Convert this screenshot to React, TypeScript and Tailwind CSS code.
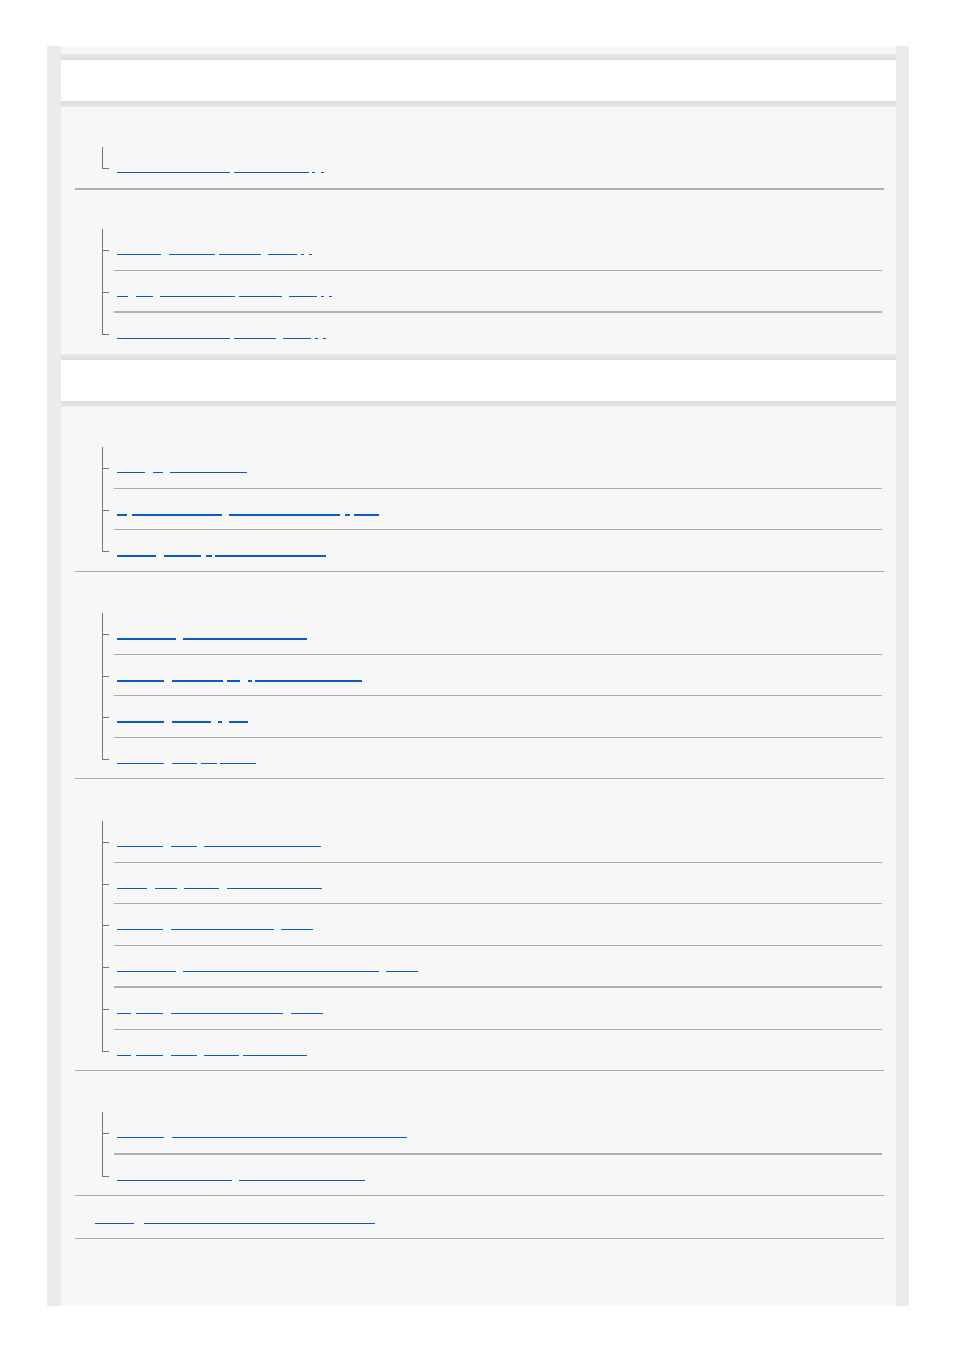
type Seg = [number, number];
type Row = { segs: Seg[]; bold?: boolean; rule?: 'thin' | 'thick' | 'none' };

const LINK = 'bg-[#0b5bc4]';

function Underline({ segs, start, bold }: { segs: Seg[]; start: number; bold?: boolean }) {
  let prev = start;
  return (
    <a href="#" className="flex">
      {segs.map(([a, b], i) => {
        const gap = a - prev;
        prev = b;
        return (
          <span
            key={i}
            className={`${LINK} ${bold ? 'h-[2px]' : 'h-px'}`}
            style={{ marginLeft: gap, width: b - a }}
          />
        );
      })}
    </a>
  );
}

function TreeItem({ row, last }: { row: Row; last: boolean }) {
  const rule = row.rule ?? 'thin';
  const h = rule === 'thick' ? 'h-[42.5px]' : rule === 'thin' ? 'h-[41.5px]' : 'h-[40.5px]';
  const border =
    rule === 'thick'
      ? 'border-b-2 border-[#b0b0b0]'
      : rule === 'thin'
        ? 'border-b border-[#ababab]'
        : '';
  return (
    <li className={`flex ${h}`}>
      {/* connector */}
      <div className="flex w-[12px] flex-col">
        <div className="h-[22px] w-[7px] border-b border-l border-[#777777]" />
        {!last && <div className="flex-1 border-l border-[#777777]" />}
      </div>
      <div className={`flex-1 pt-[25px] pl-[3px] ${border}`}>
        <Underline segs={row.segs} start={117} bold={row.bold} />
      </div>
    </li>
  );
}

function Section({ pt, rows, bottom }: { pt: string; rows: Row[]; bottom: 'thin' | 'thick' | 'none' }) {
  const b =
    bottom === 'thick'
      ? 'border-b-2 border-[#b0b0b0]'
      : bottom === 'thin'
        ? 'border-b border-[#ababab]'
        : '';
  return (
    <section className={`mr-[12px] ml-[14px] ${pt} ${b}`}>
      <ul className="mr-[2px] ml-[27px]">
        {rows.map((r, i) => (
          <TreeItem key={i} row={r} last={i === rows.length - 1} />
        ))}
      </ul>
    </section>
  );
}

function HeaderBar() {
  return (
    <div className="flex flex-col">
      <div className="h-[6px] bg-gradient-to-b from-[#e8e8e8] to-[#dcdcdc]" />
      <div className="h-[41px] bg-white" />
      <div className="h-[6px] bg-gradient-to-b from-[#dcdcdc] to-[#e9e9e9]" />
    </div>
  );
}

const s1: Row[] = [
  { segs: [[117, 230], [234, 309], [312, 315], [321, 324]], rule: 'none' },
];

const s2: Row[] = [
  { segs: [[117, 161], [169, 215], [219, 261], [268, 297], [301, 304], [309, 312]] },
  { segs: [[117, 128], [136, 153], [160, 235], [239, 282], [289, 317], [321, 324], [329, 332]], rule: 'thick' },
  { segs: [[117, 230], [234, 276], [283, 311], [315, 318], [323, 326]], rule: 'none' },
];

const s3: Row[] = [
  { segs: [[117, 145], [153, 163], [170, 247]] },
  { segs: [[117, 127], [132, 222], [229, 340], [345, 350], [354, 379]], bold: true },
  { segs: [[117, 156], [164, 201], [206, 212], [215, 326]], bold: true, rule: 'none' },
];

const s4: Row[] = [
  { segs: [[117, 176], [183, 307]], bold: true },
  { segs: [[117, 164], [172, 223], [227, 240], [248, 252], [255, 362]], bold: true },
  { segs: [[117, 164], [172, 211], [218, 222], [229, 248]], bold: true },
  { segs: [[117, 164], [172, 197], [201, 217], [220, 256]], rule: 'none' },
];

const s5: Row[] = [
  { segs: [[117, 163], [171, 197], [204, 321]] },
  { segs: [[117, 147], [155, 177], [184, 219], [227, 322]] },
  { segs: [[117, 163], [171, 274], [281, 313]] },
  { segs: [[117, 176], [183, 379], [386, 418]], rule: 'thick' },
  { segs: [[117, 131], [136, 163], [171, 283], [291, 323]] },
  { segs: [[117, 131], [136, 163], [171, 197], [204, 239], [243, 307]], rule: 'none' },
];

const s6: Row[] = [
  { segs: [[117, 164], [172, 407]], rule: 'thick' },
  { segs: [[117, 232], [239, 365]], rule: 'none' },
];

export default function App() {
  return (
    <div className="min-h-[1350px] bg-white pt-[46px] pl-[47px] font-['Liberation_Sans',sans-serif]">
      <div className="flex h-[1260px] w-[862px] bg-[#ebebeb] pr-[13px] pl-[14px]">
        <main className="flex-1 bg-[#f7f7f7] pt-[8px]">
          <HeaderBar />
          <Section pt="pt-[40px]" rows={s1} bottom="thick" />
          <Section pt="pt-[39.5px]" rows={s2} bottom="none" />
          <HeaderBar />
          <Section pt="pt-[40.5px]" rows={s3} bottom="thin" />
          <Section pt="pt-[41.5px]" rows={s4} bottom="thin" />
          <Section pt="pt-[42px]" rows={s5} bottom="thin" />
          <Section pt="pt-[41px]" rows={s6} bottom="thin" />
          <div className="mr-[12px] ml-[14px] h-[43px] border-b border-[#ababab] pt-[27px]">
            <Underline segs={[[95, 134], [144, 375]]} start={75} />
          </div>
        </main>
      </div>
    </div>
  );
}
